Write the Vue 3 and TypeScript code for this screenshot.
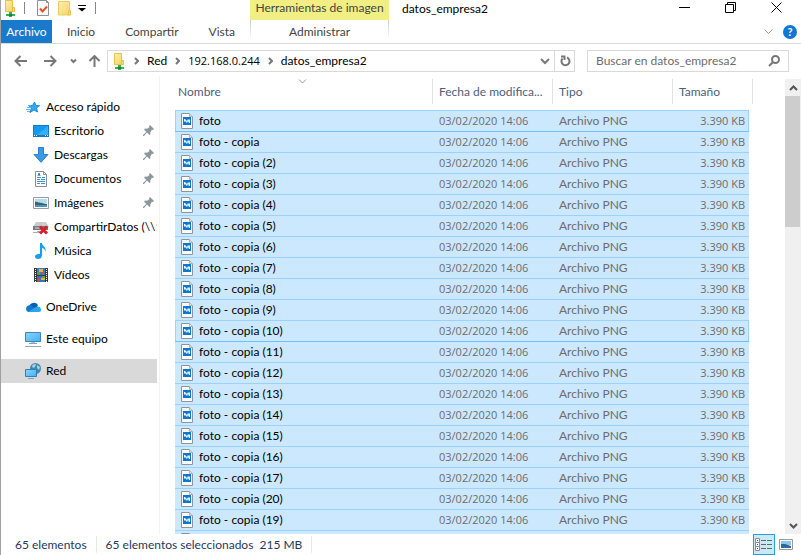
<script setup lang="ts">
import { ref } from 'vue'

interface Place {
  label: string
  icon: string
  level: 'root' | 'child'
  pinned?: boolean
  selected?: boolean
}

interface FileRow {
  name: string
  modified: string
  type: string
  size: string
  framed: boolean
}

const groups: Place[][] = [
  [
    { label: 'Acceso rápido', icon: 'star', level: 'root' },
    { label: 'Escritorio', icon: 'desktop', level: 'child', pinned: true },
    { label: 'Descargas', icon: 'download', level: 'child', pinned: true },
    { label: 'Documentos', icon: 'document', level: 'child', pinned: true },
    { label: 'Imágenes', icon: 'pictures', level: 'child', pinned: true },
    { label: 'CompartirDatos (\\\\1', icon: 'drive', level: 'child' },
    { label: 'Música', icon: 'music', level: 'child' },
    { label: 'Vídeos', icon: 'video', level: 'child' },
  ],
  [{ label: 'OneDrive', icon: 'cloud', level: 'root' }],
  [{ label: 'Este equipo', icon: 'computer', level: 'root' }],
  [{ label: 'Red', icon: 'network', level: 'root', selected: true }],
]

const copies: number[] = [...Array.from({ length: 16 }, (_, i) => i + 2), 20, 19, 18]
const names: string[] = ['foto', 'foto - copia', ...copies.map((n) => `foto - copia (${n})`)]
const files: FileRow[] = names.map((name, i) => ({
  name,
  modified: '03/02/2020 14:06',
  type: 'Archivo PNG',
  size: '3.390 KB',
  framed: i === 0 || i === 10,
}))

const query = ref('')
</script>

<template>
  <div class="window">
    <svg class="defs" aria-hidden="true">
      <defs>
        <linearGradient id="screen" x1="0" y1="0" x2="1" y2="1">
          <stop offset="0" stop-color="#8fd3fb" />
          <stop offset="1" stop-color="#3fb1f5" />
        </linearGradient>
        <linearGradient id="paper" x1="0" y1="0" x2="1" y2="1">
          <stop offset="0" stop-color="#fff1ae" />
          <stop offset="1" stop-color="#f5d365" />
        </linearGradient>
      </defs>
      <symbol id="netfolder" viewBox="0 0 13 17">
        <path d="M1.500 .5h7v11h-7z" fill="url(#paper)" stroke="#e6c04a" />
        <path d="M8.500 7.500h2v4h-2z" fill="#f8dc7a" stroke="#e6c04a" />
        <path d="M5 12h3v2h3v2H8v1H5v-1H2v-2h3z" fill="#35b04a" />
        <path d="M5 14h3v2H5z" fill="#0f8a2c" />
      </symbol>
      <symbol id="folder" viewBox="0 0 14 16">
        <path d="M.5 1.500h11v13.500H.5z" fill="url(#paper)" stroke="#ebca62" />
        <path d="M10.500 10.500h2v4.500h-2z" fill="#f8de80" stroke="#e6c04a" />
      </symbol>
      <symbol id="check" viewBox="0 0 13 16">
        <path d="M.5 .5h9l2 2v13H.5z" fill="#f8f9fb" stroke="#8d9299" />
        <path d="M9.500 .5v2h2" fill="none" stroke="#8d9299" />
        <path d="M3 8.500l2.500 3L10 6.500" fill="none" stroke="#e0562a" stroke-width="2" />
      </symbol>
      <symbol id="star" viewBox="0 0 16 16">
        <path d="M9.500 3l1.300 3.500 3.700 .2-3 2.300L12.500 13 9 11 5 13.500l1.300-4.300L4 6.700l3.500-.2z" fill="#35a7ee" stroke="#1b8bd8" />
        <path d="M3 6.500h3M2 8.500h4M1 10.500h4M2 12.500h3" stroke="#5ab8f2" />
      </symbol>
      <symbol id="desktop" viewBox="0 0 16 16">
        <path d="M0 2h16v12H0z" fill="#1479c9" />
        <path d="M1 3h14v9H1z" fill="#159bee" />
        <path d="M15 3v9H4z" fill="#33b1fb" />
        <path d="M1 12.500h1M3 12.500h1M12 12.500h1M14 12.500h1" stroke="#fff" />
      </symbol>
      <symbol id="download" viewBox="0 0 16 16">
        <path d="M5.500 .5h5v7h4.500L8 15.300 1 7.500h4.500z" fill="#3b9ae6" stroke="#2b80cc" />
      </symbol>
      <symbol id="document" viewBox="0 0 16 16">
        <path d="M2.500 .5h8l3 3v12h-11z" fill="#fff" stroke="#8a8f94" />
        <path d="M10.500 .5v3h3" fill="none" stroke="#8a8f94" />
        <path d="M4 6.500h4M9 6.500h3M4 8.500h3M8 8.500h4M4 10.500h8M4 12.500h3M8 12.500h4" stroke="#3692cf" />
        <path d="M5 5l1-3 1 3" fill="none" stroke="#2879b7" />
      </symbol>
      <symbol id="pictures" viewBox="0 0 16 16">
        <path d="M.5 2.500h15v11H.5z" fill="#fff" stroke="#9a9da0" />
        <path d="M2 4h12v4H2z" fill="#b5dcf4" />
        <path d="M2 6.500l4 1 8 1.500V10H2z" fill="#35695f" />
        <path d="M2 10h12v2H2z" fill="#4a90c9" />
      </symbol>
      <symbol id="drive" viewBox="0 0 16 16">
        <path d="M3 3h10l3 5H0z" fill="#c9cccd" />
        <path d="M0 7h15v4H0z" fill="#77797b" />
        <path d="M2 9h5" stroke="#d9dcdd" />
        <path d="M4 12h3v2H0v-1h4z" fill="#a9adb0" />
        <path d="M7 7.500l7 7M14 7.500l-7 7" stroke="#d5202b" stroke-width="3" />
      </symbol>
      <symbol id="music" viewBox="0 0 16 16">
        <path d="M7 0h2c0 3 4.500 3.500 3.500 9-.3-2.500-1.500-3.500-3.500-4v7.500C9 15 7 16 5 16s-3-1-3-2.500S4 11 5.500 11H7z" fill="#169ff0" />
      </symbol>
      <symbol id="video" viewBox="0 0 16 16">
        <path d="M1 1h14v14H1z" fill="#37393c" />
        <path d="M4 1h8v7H4z" fill="#3f78c9" />
        <path d="M4 9h8v6H4z" fill="#3c70bd" />
        <path d="M6 2h4v3H6zM8 11h4v2H8z" fill="#e7b23c" />
        <path d="M4 5h3v3H4zM9 9h3v2H9z" fill="#5da04c" />
        <path d="M8 5h3v2H8zM5 11h2v3H5z" fill="#c75035" />
        <path d="M2.500 2v13M13.500 2v13" stroke="#fff" stroke-dasharray="1 1" />
      </symbol>
      <symbol id="cloud" viewBox="0 0 16 16">
        <path d="M4 8a5 5 0 0 1 9-2l-2 4H4z" fill="#0a5fb4" />
        <path d="M3.500 13A3.500 3.500 0 0 1 4 6.200c3 0 5 2 7 4L8 13z" fill="#0f78d4" />
        <path d="M3 13l8-5c2-1.500 5 0 5 2.500S14.500 13 13 13z" fill="#28a6ea" />
      </symbol>
      <symbol id="computer" viewBox="0 0 16 16">
        <path d="M.5 1.500h15v9H.5z" fill="url(#screen)" stroke="#3f86b5" />
        <path d="M6 11h4v1H6z" fill="#b5c1ca" />
        <path d="M4 12.500h8" stroke="#8ba1b2" />
        <path d="M0 15.500h16" stroke="#90a9bd" />
      </symbol>
      <symbol id="network" viewBox="0 0 16 16">
        <circle cx="10.500" cy="5.500" r="5.500" fill="#3f88b0" />
        <path d="M7 3c1-2 3-2 4-2l-1 3-2 1zM12 2l3 2-1 3-2-2z" fill="#a5d3e4" />
        <path d="M.5 6.500h11v7H.5z" fill="url(#screen)" stroke="#2f7fb2" />
        <path d="M3 15.500h6" stroke="#7da6bf" />
      </symbol>
      <symbol id="pin" viewBox="0 0 12 12">
        <path d="M7 0l4 4-1 1-1-.3L7.300 7.200 7.500 9l-1 1L4 7.500 1 11l-1 0 0-1L3.300 7 1 4.600 2 3.500l2.200.3L6.500 2 6 1z" fill="#8b979f" />
      </symbol>
      <symbol id="image-file" viewBox="0 0 12 16">
        <path d="M.5 .5h8l3 3v12H.5z" fill="#fcfcfc" stroke="#8f9499" />
        <path d="M8.500 .5v3h3" fill="#e5e5e5" stroke="#aeb2b5" />
        <path d="M2 4h8v8H2z" fill="#0d76cf" />
        <path d="M3 6h1l1 1 1 1 1-2 1 1 1-1v4H8L7 8 6 10 5 9 4 8 3 9z" fill="#e7f4ff" />
      </symbol>
      <symbol id="crumb" viewBox="0 0 5 8">
        <path d="M1 1l3 3-3 3" fill="none" stroke="#777" stroke-width="2" />
      </symbol>
    </svg>

    <header class="titlebar">
      <div class="quick">
        <svg class="app" viewBox="0 0 13 17"><use href="#netfolder" /></svg>
        <span class="rule"></span>
        <button type="button" aria-label="Propiedades"><svg class="check" viewBox="0 0 13 16"><use href="#check" /></svg></button>
        <button type="button" aria-label="Nueva carpeta"><svg class="newfolder" viewBox="0 0 14 16"><use href="#folder" /></svg></button>
        <button type="button" class="customize" aria-label="Personalizar"><svg class="custom" viewBox="0 0 8 7"><path d="M0 .5h8" stroke="#000" /><path d="M0 3h8L4 6.500z" /></svg></button>
        <span class="rule"></span>
      </div>
      <div class="context">Herramientas de imagen</div>
      <h1>datos_empresa2</h1>
      <div class="controls">
        <button type="button" aria-label="Minimizar"><svg viewBox="0 0 11 11"><path d="M0 5.500h11" /></svg></button>
        <button type="button" aria-label="Restaurar"><svg viewBox="0 0 11 11"><path d="M.5 2.500h8v8h-8zM2.500 2V.5h8v8H9" /></svg></button>
        <button type="button" aria-label="Cerrar"><svg viewBox="0 0 11 11"><path d="M.5 .5l10 10M10.500 .5l-10 10" /></svg></button>
      </div>
    </header>

    <nav class="ribbon" aria-label="Cinta de opciones">
      <div class="tabs">
        <button type="button" class="file">Archivo</button>
        <button type="button">Inicio</button>
        <button type="button">Compartir</button>
        <button type="button">Vista</button>
      </div>
      <button type="button" class="manage">Administrar</button>
      <div class="help">
        <button type="button" aria-label="Expandir la cinta"><svg class="expand" viewBox="0 0 9 6"><path d="M.5 .5l4 4 4-4" fill="none" stroke="#9a9a9a" /></svg></button>
        <button type="button" class="question" aria-label="Ayuda">?</button>
      </div>
    </nav>

    <div class="address-row">
      <div class="history">
        <button type="button" class="wide" aria-label="Atrás"><svg class="arrow" viewBox="0 0 13 12"><path d="M6.500 1l-5 5 5 5M2 6h11" /></svg></button>
        <button type="button" class="wide" aria-label="Adelante"><svg class="arrow" viewBox="0 0 13 12"><path d="M6.500 1l5 5-5 5M11 6H0" /></svg></button>
        <button type="button" class="recent" aria-label="Ubicaciones recientes"><svg class="chev" viewBox="0 0 9 6"><path d="M2 1.500l2.500 2.500L7 1.500" /></svg></button>
        <button type="button" class="up" aria-label="Subir"><svg class="arrow" viewBox="0 0 13 12"><path d="M1.500 6l5-5 5 5M6.500 1.500V12" /></svg></button>
      </div>
      <div class="address">
        <ol class="crumbs">
          <li><svg class="app" viewBox="0 0 13 17"><use href="#netfolder" /></svg></li>
          <li><svg class="crumb" viewBox="0 0 5 8"><use href="#crumb" /></svg><a href="#red">Red</a></li>
          <li><svg class="crumb" viewBox="0 0 5 8"><use href="#crumb" /></svg><a href="#servidor" class="digits">192.168.0.244</a></li>
          <li><svg class="crumb" viewBox="0 0 5 8"><use href="#crumb" /></svg><a href="#datos">datos_empresa2</a></li>
        </ol>
        <button type="button" class="previous" aria-label="Ubicaciones anteriores"><svg class="drop" viewBox="0 0 10 7"><path d="M1 1l4 4 4-4" /></svg></button>
        <button type="button" class="refresh" aria-label="Actualizar"><svg class="reload" viewBox="0 0 12 12"><path d="M8 2.500A4 4 0 1 1 3.500 3.500M2 1.500h3.500V5" /></svg></button>
      </div>
      <label class="search">
        <input v-model="query" type="search" aria-label="Buscar" placeholder="Buscar en datos_empresa2" />
        <svg class="lens" viewBox="0 0 12 12"><circle cx="7.500" cy="4.500" r="3.500" /><path d="M5 7L1 11" /></svg>
      </label>
    </div>

    <main>
      <aside>
        <ul v-for="(group, g) in groups" :key="g">
          <li v-for="place in group" :key="place.label">
            <a :href="`#${place.icon}`" :class="[place.level, { selected: place.selected }]">
              <svg class="place" viewBox="0 0 16 16"><use :href="`#${place.icon}`" /></svg>
              <span>{{ place.label }}</span>
              <svg v-if="place.pinned" class="pin" viewBox="0 0 12 12"><use href="#pin" /></svg>
            </a>
          </li>
        </ul>
      </aside>

      <section class="listing">
        <table>
          <colgroup><col /><col class="mid" /><col class="mid" /><col class="last" /></colgroup>
          <thead>
            <tr>
              <th scope="col" aria-sort="ascending">
                <div class="name">Nombre<svg class="sort" viewBox="0 0 9 6"><path d="M1 .5l3.500 3.500L8 .5" /></svg></div>
              </th>
              <th scope="col"><div>Fecha de modifica...</div></th>
              <th scope="col"><div>Tipo</div></th>
              <th scope="col"><div class="end">Tamaño</div></th>
            </tr>
          </thead>
          <tbody>
            <tr v-for="file in files" :key="file.name" :class="{ framed: file.framed }">
              <td><div class="cell"><svg class="file-icon" viewBox="0 0 12 16"><use href="#image-file" /></svg>{{ file.name }}</div></td>
              <td class="meta digits">{{ file.modified }}</td>
              <td class="meta">{{ file.type }}</td>
              <td class="meta digits size">{{ file.size }}</td>
            </tr>
          </tbody>
        </table>
      </section>

      <div class="scrollbar" aria-hidden="true">
        <svg class="scroll-arrow" viewBox="0 0 9 6"><path d="M1 5l3.500-3.500L8 5" /></svg>
        <div class="track"><div class="thumb"></div></div>
        <svg class="scroll-arrow" viewBox="0 0 9 6"><path d="M1 1l3.500 3.500L8 1" /></svg>
      </div>
    </main>

    <footer>
      <span class="status">65 elementos</span>
      <span class="status">65 elementos seleccionados&nbsp; 215 MB</span>
      <div class="views">
        <button type="button" class="active" aria-label="Detalles">
          <svg class="details" viewBox="0 0 18 14">
            <path d="M.5 .5h4v4h-4zM.5 4.500h4v4h-4zM.5 8.500h4v4h-4z" fill="#fff" stroke="#8d8d8d" />
            <path d="M2 2.500h1M2 6.500h1M2 10.500h1" stroke="#9c2c2c" />
            <path d="M6 2.500h5M12 2.500h5M6 6.500h5M12 6.500h5M6 10.500h5M12 10.500h5" stroke="#666" />
          </svg>
        </button>
        <button type="button" aria-label="Iconos grandes">
          <svg class="thumbs" viewBox="0 0 14 12">
            <path d="M.5 .5h13v10H.5z" fill="#fff" stroke="#999" />
            <path d="M2 2h10v4H2z" fill="#8cc3ef" />
            <path d="M2 5l4 0 6 2v2H2z" fill="#2d6a84" />
            <path d="M2 7.500h10V9H2z" fill="#2a6fb5" />
          </svg>
        </button>
      </div>
    </footer>
  </div>
</template>

<style>
body {
  margin: 0;
}
</style>

<style scoped>
.window {
  box-sizing: border-box;
  display: flex;
  flex-direction: column;
  height: 100vh;
  overflow: hidden;
  border-left: 1px solid #a0a0a0;
  background: #fff;
  color: #000;
  font: 12px/16px Lato, "Open Sans", sans-serif;
}
.defs {
  position: absolute;
  width: 0;
  height: 0;
}
svg {
  display: block;
  flex: none;
}
button {
  display: flex;
  align-items: center;
  justify-content: center;
  padding: 0;
  border: 0;
  background: none;
  color: inherit;
  font: inherit;
}
a {
  color: inherit;
  text-decoration: none;
}
ul,
ol {
  margin: 0;
  padding: 0;
  list-style: none;
}
.digits {
  font-family: "Open Sans", sans-serif;
  font-size: 11px;
}

.titlebar {
  display: flex;
  height: 20px;
}
.quick {
  display: flex;
  align-items: center;
  box-sizing: border-box;
  width: 249px;
  padding: 0 0 4px 3px;
}
.rule {
  width: 1px;
  height: 12px;
  margin: 0 7px;
  background: #888;
}
.app {
  width: 13px;
  height: 17px;
}
.quick button {
  width: 22px;
}
.quick .customize {
  width: 12px;
}
.check {
  width: 13px;
  height: 16px;
}
.newfolder {
  width: 14px;
  height: 16px;
}
.custom {
  width: 8px;
  height: 7px;
}
.context {
  width: 139px;
  height: 20px;
  background: #f1ef83;
  color: #444;
  line-height: 15px;
  text-align: center;
}
h1 {
  flex: 1;
  margin: 0;
  padding-left: 13px;
  font-size: 12px;
  font-weight: 400;
  line-height: 18px;
}
.controls {
  display: flex;
  height: 15px;
  padding-right: 2px;
}
.controls button {
  width: 46px;
}
.controls svg {
  width: 11px;
  height: 11px;
  fill: none;
  stroke: #000;
}

.ribbon {
  display: flex;
  height: 23px;
  border-bottom: 1px solid #dadbdc;
  color: #444;
}
.tabs {
  display: flex;
  width: 249px;
}
.tabs button {
  padding: 0 15px;
}
.tabs .file {
  width: 56px;
  padding: 0;
  background: #1979ca;
  color: #fff;
}
.manage {
  width: 139px;
  border: solid;
  border-width: 0 1px;
  border-image: linear-gradient(#c4c4c4, #fff 80%) 1;
}
.help {
  display: flex;
  flex: 1;
  align-items: center;
  justify-content: flex-end;
  gap: 10px;
  padding-right: 4px;
}
.expand {
  width: 9px;
  height: 6px;
}
.question {
  width: 14px;
  height: 14px;
  border-radius: 50%;
  background: #0f78d4;
  color: #fff;
  font-size: 11px;
  font-weight: 700;
}

.address-row {
  display: flex;
  gap: 12px;
  padding: 6px 12px 4px 4px;
}
.history {
  display: flex;
  margin-right: -12px;
}
.wide {
  width: 30px;
}
.recent {
  width: 16px;
}
.up {
  width: 26px;
}
.arrow,
.chev,
.drop,
.reload,
.lens,
.sort,
.scroll-arrow {
  fill: none;
  stroke: #777;
  stroke-width: 2;
}
.arrow {
  width: 13px;
  height: 12px;
}
.chev {
  width: 9px;
  height: 6px;
}
.address {
  display: flex;
  flex: 1;
  box-sizing: border-box;
  height: 22px;
  border: 1px solid #d9d9d9;
}
.crumbs {
  display: flex;
  flex: 1;
  align-items: center;
  gap: 8px;
  padding-left: 5px;
}
.crumbs li {
  display: flex;
  align-items: center;
  gap: 8px;
}
.crumb {
  width: 5px;
  height: 8px;
}
.drop {
  width: 10px;
  height: 7px;
}
.previous {
  width: 18px;
}
.refresh {
  width: 20px;
  border-left: 1px solid #d9d9d9;
}
.reload,
.lens {
  width: 12px;
  height: 12px;
}
.search {
  display: flex;
  align-items: center;
  box-sizing: border-box;
  width: 202px;
  padding: 0 8px;
  border: 1px solid #d9d9d9;
}
.search input {
  flex: 1;
  min-width: 0;
  padding: 0;
  border: 0;
  outline: 0;
  background: none;
  font: inherit;
}
.search input::placeholder {
  color: #6d6d6d;
  opacity: 1;
}

main {
  display: flex;
  flex: 1;
  min-height: 0;
}
aside {
  box-sizing: border-box;
  display: flex;
  flex-direction: column;
  gap: 8px;
  width: 159px;
  padding: 19px 2px 0 0;
  border-right: 1px solid #f3f3f3;
}
aside a {
  display: flex;
  align-items: center;
  gap: 5px;
  height: 24px;
}
aside .root {
  padding-left: 24px;
}
aside .child {
  padding-left: 32px;
}
aside span {
  flex: 1;
  overflow: hidden;
  white-space: nowrap;
}
.selected {
  background: #d9d9d9;
}
.place {
  width: 16px;
  height: 16px;
}
.pin {
  width: 12px;
  height: 12px;
  margin-right: 2px;
}

.listing {
  flex: 1;
  min-width: 0;
  overflow: hidden;
  padding: 3px 36px 0 15px;
}
table {
  width: 100%;
  table-layout: fixed;
  border-spacing: 0;
}
.mid {
  width: 120px;
}
.last {
  width: 76px;
}
th {
  padding: 0 0 6px;
  color: #4c607a;
  font-weight: 400;
  text-align: left;
}
th div {
  box-sizing: border-box;
  height: 25px;
  padding-left: 6px;
  border-right: 1px solid #e2e2e2;
  line-height: 25px;
}
th .name {
  position: relative;
  padding-left: 3px;
}
th .end {
  margin-right: -4px;
}
.sort {
  position: absolute;
  top: 0;
  left: calc(50% - 6px);
  width: 9px;
  height: 6px;
  stroke: #999;
  stroke-width: 1;
}
td {
  box-sizing: border-box;
  height: 21px;
  padding: 0;
  border-bottom: 1px solid #99d1ff;
  background: #cce8ff;
  white-space: nowrap;
}
tbody tr:first-child td {
  height: 22px;
  border-top: 1px solid #99d1ff;
}
.framed td {
  border-bottom-color: #70bfff;
}
.framed td:first-child {
  box-shadow: inset 1px 0 #99d1ff;
}
.framed td:last-child {
  box-shadow: inset -1px 0 #99d1ff;
}
.cell {
  display: flex;
  align-items: center;
  gap: 6px;
  height: 16px;
  padding-left: 6px;
}
.file-icon {
  width: 12px;
  height: 16px;
}
.meta {
  padding-left: 6px;
  color: #6d6d6d;
}
.size {
  padding: 0 4px 0 0;
  text-align: right;
}

.scrollbar {
  display: flex;
  flex-direction: column;
  align-items: center;
  width: 16px;
  margin-top: 3px;
  background: #f0f0f0;
}
.scroll-arrow {
  width: 9px;
  height: 6px;
  margin: 6px 0 5px;
  stroke: #555;
}
.track {
  flex: 1;
  align-self: stretch;
  padding-right: 1px;
}
.thumb {
  height: 31%;
  background: #cdcdcd;
}

footer {
  display: flex;
  align-items: center;
  height: 21px;
  padding-left: 5px;
  color: #1e395b;
}
.status {
  padding: 1px 9px 0;
  border-right: 1px solid #e7e7e7;
}
.views {
  display: flex;
  align-self: stretch;
  margin-left: auto;
  padding-right: 5px;
}
.views button {
  width: 21px;
}
.views .active {
  width: 22px;
  border: 1px solid #26a0da;
  background: #cbe8f6;
}
.details {
  width: 18px;
  height: 14px;
}
.thumbs {
  width: 14px;
  height: 12px;
}
</style>
